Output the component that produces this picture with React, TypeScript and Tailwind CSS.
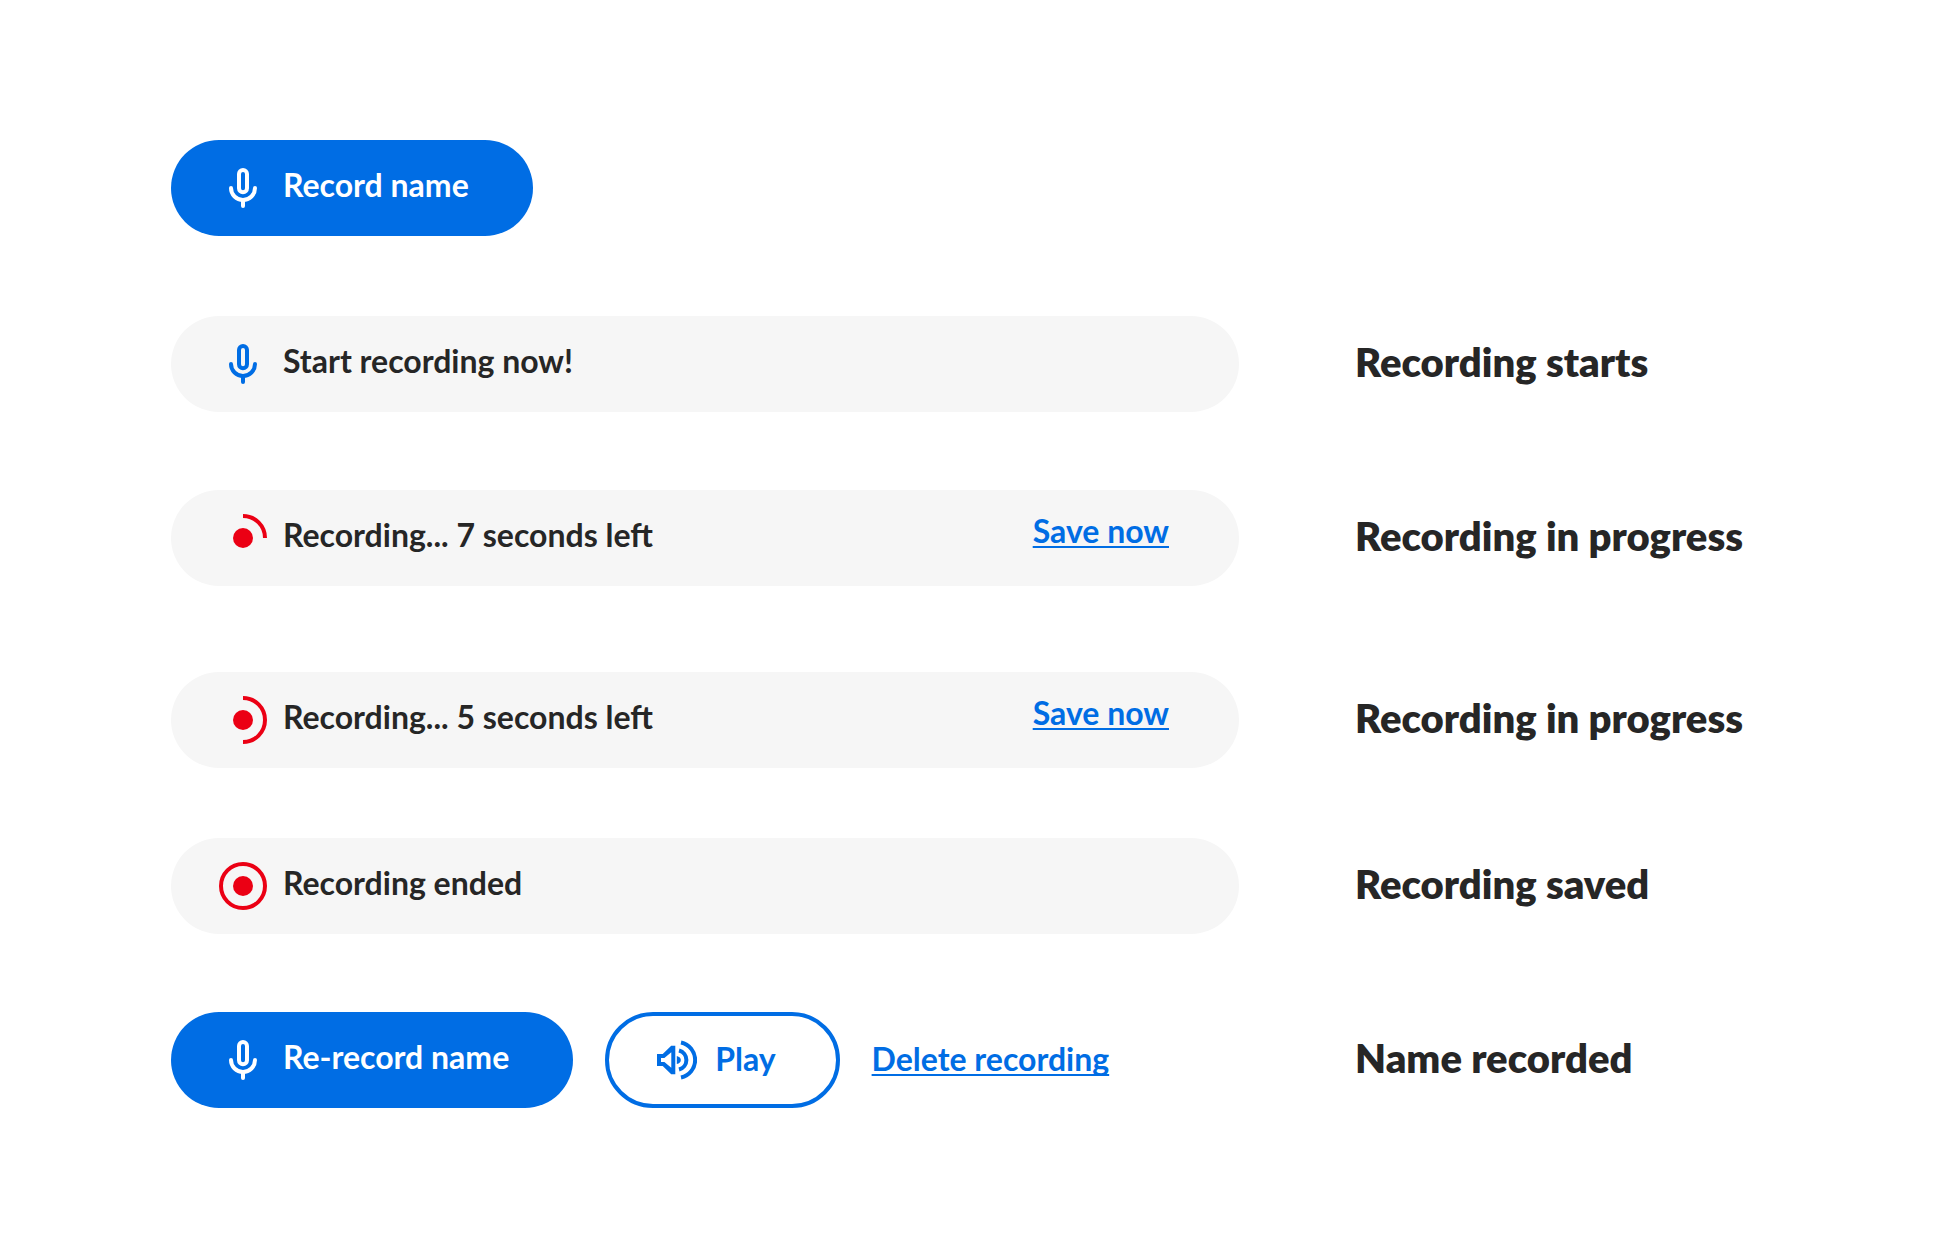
import type { ReactNode } from "react";

function MicIcon({ className = "" }: { className?: string }) {
  return (
    <svg
      viewBox="0 0 48 48"
      fill="none"
      stroke="currentColor"
      strokeWidth="4"
      strokeLinecap="round"
      aria-hidden="true"
      className={`size-12 shrink-0 ${className}`}
    >
      <rect x="20" y="6" width="8" height="22.3" rx="4" />
      <path d="M12 24a12 12 0 0 0 24 0" />
      <path d="M24 36v6" />
    </svg>
  );
}

const ARCS = {
  quarter: "M24 2a22 22 0 0 1 22 22",
  half: "M24 2a22 22 0 0 1 0 44",
  full: "M24 2a22 22 0 0 1 0 44a22 22 0 0 1 0-44",
};

function RecordIcon({ progress }: { progress: keyof typeof ARCS }) {
  return (
    <svg
      viewBox="0 0 48 48"
      fill="none"
      aria-hidden="true"
      className="size-12 shrink-0 text-[#eb0014]"
    >
      <circle cx="24" cy="24" r="10" fill="currentColor" />
      <path d={ARCS[progress]} stroke="currentColor" strokeWidth="4" />
    </svg>
  );
}

function SpeakerIcon() {
  return (
    <svg
      viewBox="0 0 40 40"
      fill="none"
      aria-hidden="true"
      className="size-10 shrink-0"
    >
      <path
        fill="currentColor"
        fillRule="evenodd"
        d="M0 14h5.7l8.5-8.3h4.1v28.6h-4.1L5.7 26H0zM4 18v4h3.4l6.9 5.8V12.2L7.4 18z"
      />
      <path fill="currentColor" d="M19.8 16q4 1 4 4t-4 4z" />
      <path
        stroke="currentColor"
        strokeWidth="4"
        d="M22 10.5a9.8 9.8 0 0 1 0 19M24 2.5a17.9 17.9 0 0 1 0 35"
      />
    </svg>
  );
}

function PrimaryButton({ children }: { children: ReactNode }) {
  return (
    <button
      type="button"
      className="flex h-24 items-center gap-4 rounded-full bg-[#006de4] pr-16 pl-12 font-bold text-white"
    >
      <MicIcon />
      <span className="pb-1.5">{children}</span>
    </button>
  );
}

function TextLink({ children }: { children: ReactNode }) {
  return (
    <a
      href="#"
      className="font-bold text-[#006de4] underline decoration-2 underline-offset-3 [text-decoration-skip-ink:none]"
    >
      {children}
    </a>
  );
}

type StatusBarProps = {
  icon: ReactNode;
  text: string;
  action?: string;
};

function StatusBar({ icon, text, action }: StatusBarProps) {
  return (
    <div className="flex h-24 items-center gap-4 rounded-full bg-[#f6f6f6] pr-[70px] pl-12 font-bold">
      {icon}
      <span className="pb-1.5">{text}</span>
      {action && (
        <div className="ml-auto pb-3.5">
          <TextLink>{action}</TextLink>
        </div>
      )}
    </div>
  );
}

type RowProps = {
  label?: string;
  className?: string;
  children: ReactNode;
};

function Row({ label, className = "", children }: RowProps) {
  return (
    <div
      className={`grid grid-cols-[minmax(0,1068px)_minmax(0,1fr)] items-center gap-x-[116px] ${className}`}
    >
      {children}
      {label && (
        <h2 className="pb-1 text-[40px] leading-12 font-extrabold whitespace-nowrap">
          {label}
        </h2>
      )}
    </div>
  );
}

export default function App() {
  return (
    <main className="min-h-screen bg-white px-[171px] py-[140px] font-['Lato',sans-serif] text-[32px] leading-10 text-[#262626]">
      <Row>
        <div className="flex">
          <PrimaryButton>Record name</PrimaryButton>
        </div>
      </Row>

      <Row label="Recording starts" className="mt-20">
        <StatusBar
          icon={<MicIcon className="text-[#006de4]" />}
          text="Start recording now!"
        />
      </Row>

      <Row label="Recording in progress" className="mt-[78px]">
        <StatusBar
          icon={<RecordIcon progress="quarter" />}
          text="Recording... 7 seconds left"
          action="Save now"
        />
      </Row>

      <Row label="Recording in progress" className="mt-[86px]">
        <StatusBar
          icon={<RecordIcon progress="half" />}
          text="Recording... 5 seconds left"
          action="Save now"
        />
      </Row>

      <Row label="Recording saved" className="mt-[70px]">
        <StatusBar icon={<RecordIcon progress="full" />} text="Recording ended" />
      </Row>

      <Row label="Name recorded" className="mt-[78px]">
        <div className="flex items-center gap-8">
          <PrimaryButton>Re-record name</PrimaryButton>
          <button
            type="button"
            className="flex h-24 items-center gap-[18px] rounded-full border-4 border-[#006de4] pr-[60px] pl-12 font-bold text-[#006de4]"
          >
            <SpeakerIcon />
            <span className="pb-0.5">Play</span>
          </button>
          <div className="pb-0.5">
            <TextLink>Delete recording</TextLink>
          </div>
        </div>
      </Row>
    </main>
  );
}
